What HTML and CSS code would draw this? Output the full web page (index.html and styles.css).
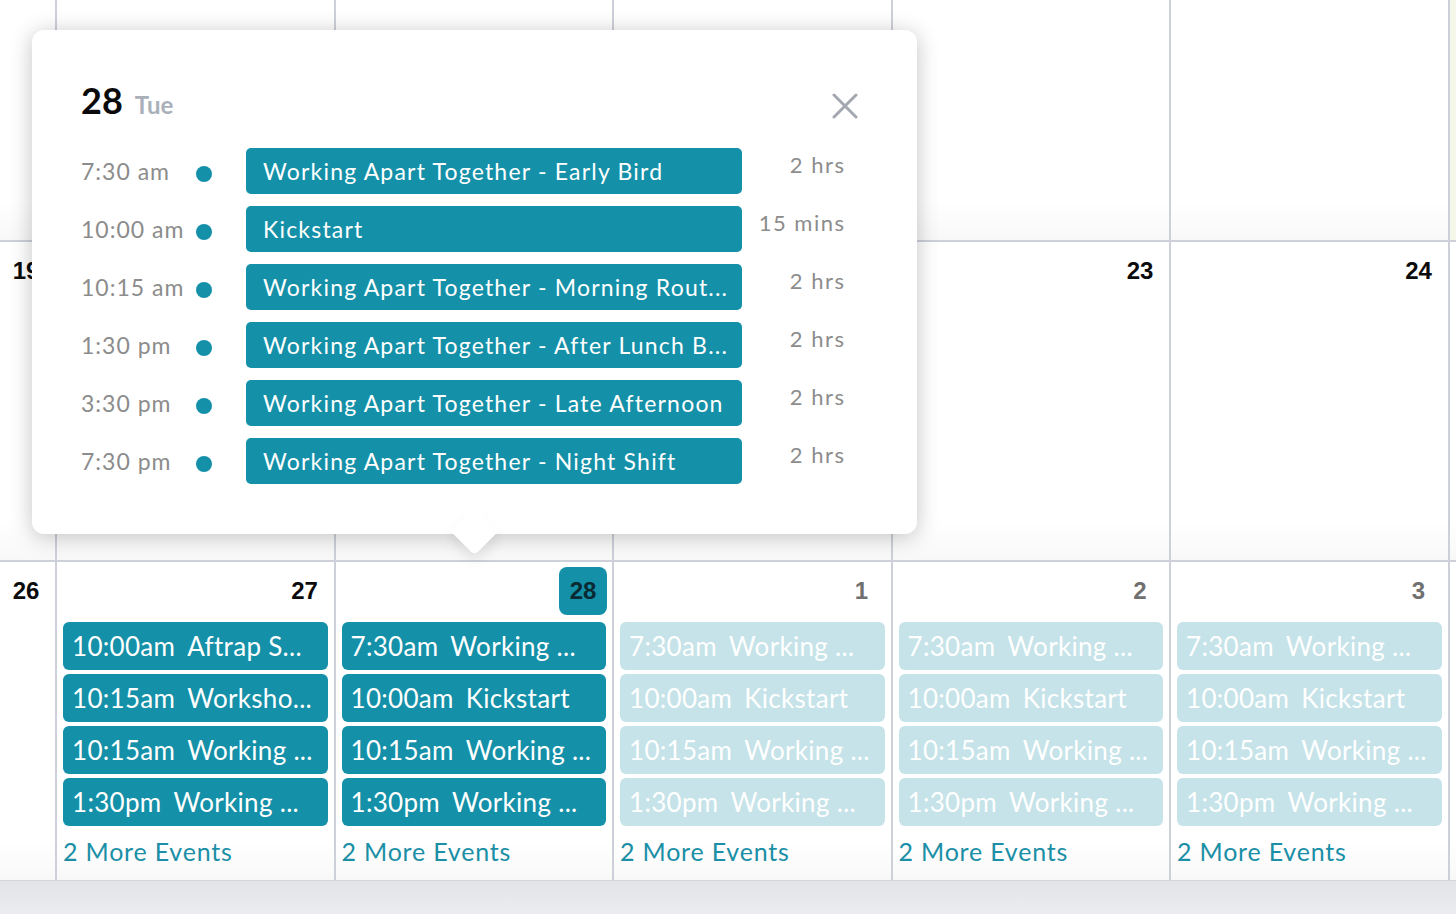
FILE: index.html
```html
<!DOCTYPE html>
<html lang="en">
<head>
<meta charset="utf-8">
<title>Calendar</title>
<link rel="stylesheet" href="styles.css">
</head>
<body>
<div class="app">
  <div class="calendar">
    <div class="month-grid">
      <div class="cell"></div>
      <div class="cell"></div>
      <div class="cell"></div>
      <div class="cell"></div>
      <div class="cell"></div>
      <div class="cell"></div>
      <div class="cell cell-today"></div>

      <div class="cell"><div class="day-head"><span class="day-num">19</span></div></div>
      <div class="cell"></div>
      <div class="cell"></div>
      <div class="cell"></div>
      <div class="cell"><div class="day-head"><span class="day-num">23</span></div></div>
      <div class="cell"><div class="day-head"><span class="day-num">24</span></div></div>
      <div class="cell"></div>

      <div class="cell"><div class="day-head"><span class="day-num">26</span></div></div>
      <div class="cell">
        <div class="day-head"><span class="day-num">27</span></div>
        <div class="chip"><span class="chip-time">10:00am</span>Aftrap S...</div>
        <div class="chip"><span class="chip-time">10:15am</span>Worksho...</div>
        <div class="chip"><span class="chip-time">10:15am</span>Working ...</div>
        <div class="chip"><span class="chip-time">1:30pm</span>Working ...</div>
        <div class="more">2 More Events</div>
      </div>
      <div class="cell">
        <div class="day-head"><span class="day-num day-num-selected">28</span></div>
        <div class="chip"><span class="chip-time">7:30am</span>Working ...</div>
        <div class="chip"><span class="chip-time">10:00am</span>Kickstart</div>
        <div class="chip"><span class="chip-time">10:15am</span>Working ...</div>
        <div class="chip"><span class="chip-time">1:30pm</span>Working ...</div>
        <div class="more">2 More Events</div>
      </div>
      <div class="cell">
        <div class="day-head"><span class="day-num day-num-next">1</span></div>
        <div class="chip chip-faded"><span class="chip-time">7:30am</span>Working ...</div>
        <div class="chip chip-faded"><span class="chip-time">10:00am</span>Kickstart</div>
        <div class="chip chip-faded"><span class="chip-time">10:15am</span>Working ...</div>
        <div class="chip chip-faded"><span class="chip-time">1:30pm</span>Working ...</div>
        <div class="more">2 More Events</div>
      </div>
      <div class="cell">
        <div class="day-head"><span class="day-num day-num-next">2</span></div>
        <div class="chip chip-faded"><span class="chip-time">7:30am</span>Working ...</div>
        <div class="chip chip-faded"><span class="chip-time">10:00am</span>Kickstart</div>
        <div class="chip chip-faded"><span class="chip-time">10:15am</span>Working ...</div>
        <div class="chip chip-faded"><span class="chip-time">1:30pm</span>Working ...</div>
        <div class="more">2 More Events</div>
      </div>
      <div class="cell">
        <div class="day-head"><span class="day-num day-num-next">3</span></div>
        <div class="chip chip-faded"><span class="chip-time">7:30am</span>Working ...</div>
        <div class="chip chip-faded"><span class="chip-time">10:00am</span>Kickstart</div>
        <div class="chip chip-faded"><span class="chip-time">10:15am</span>Working ...</div>
        <div class="chip chip-faded"><span class="chip-time">1:30pm</span>Working ...</div>
        <div class="more">2 More Events</div>
      </div>
      <div class="cell"></div>
    </div>
  </div>

  <div class="popover">
    <div class="popover-head">
      <div class="popover-date"><span class="popover-day">28</span><span class="popover-weekday">Tue</span></div>
      <button class="popover-close" aria-label="Close">
        <svg width="26" height="26" viewBox="0 0 26 26"><path d="M2 2 L24 24 M24 2 L2 24" stroke="#a3a7b0" stroke-width="3" stroke-linecap="round" fill="none"/></svg>
      </button>
    </div>
    <div class="agenda">
      <div class="agenda-row"><span class="agenda-time">7:30 am</span><span class="agenda-dot"></span><span class="agenda-bar">Working Apart Together - Early Bird</span><span class="agenda-dur">2 hrs</span></div>
      <div class="agenda-row"><span class="agenda-time">10:00 am</span><span class="agenda-dot"></span><span class="agenda-bar">Kickstart</span><span class="agenda-dur">15 mins</span></div>
      <div class="agenda-row"><span class="agenda-time">10:15 am</span><span class="agenda-dot"></span><span class="agenda-bar">Working Apart Together - Morning Rout...</span><span class="agenda-dur">2 hrs</span></div>
      <div class="agenda-row"><span class="agenda-time">1:30 pm</span><span class="agenda-dot"></span><span class="agenda-bar">Working Apart Together - After Lunch B...</span><span class="agenda-dur">2 hrs</span></div>
      <div class="agenda-row"><span class="agenda-time">3:30 pm</span><span class="agenda-dot"></span><span class="agenda-bar">Working Apart Together - Late Afternoon</span><span class="agenda-dur">2 hrs</span></div>
      <div class="agenda-row"><span class="agenda-time">7:30 pm</span><span class="agenda-dot"></span><span class="agenda-bar">Working Apart Together - Night Shift</span><span class="agenda-dur">2 hrs</span></div>
    </div>
    <span class="popover-arrow"></span>
  </div>

  <div class="footer-bar"></div>
</div>
</body>
</html>
```

FILE: styles.css
```css
* { box-sizing: border-box; }

html, body {
  margin: 0;
  padding: 0;
  width: 1456px;
  height: 914px;
  overflow: hidden;
  background: #ffffff;
  font-family: "Lato", "Open Sans", sans-serif;
}

.app {
  position: relative;
  width: 1456px;
  height: 914px;
  display: flex;
  flex-direction: column;
}

.calendar {
  height: 880px;
  overflow: hidden;
  background: #ffffff;
  flex: none;
}

.month-grid {
  display: grid;
  grid-template-columns: repeat(7, 276.5px);
  grid-template-rows: repeat(3, 318px);
  gap: 2px;
  background: #cdd0d9;
  width: max-content;
  margin-left: -221.5px;
  margin-top: -78px;
}

.cell {
  background: #ffffff;
  padding: 6px 6px 0 6px;
  display: flex;
  flex-direction: column;
  background-image: linear-gradient(to bottom, #ffffff 88%, #f8f8f9 100%);
}

.cell-today {
  background: #f6f7eb;
}

.day-head {
  height: 48px;
  display: flex;
  justify-content: flex-end;
  align-items: center;
  margin-top: -1px;
  margin-right: -1px;
  margin-bottom: 7px;
  flex: none;
}

.day-num {
  font-family: "Liberation Sans", Arial, sans-serif;
  font-weight: 700;
  font-size: 24px;
  color: #0b0b0b;
  min-width: 48px;
  text-align: center;
  line-height: 28px;
}

.day-num-next {
  color: #707070;
}

.day-num-selected {
  background: #1490a8;
  color: #0a2a33;
  width: 48px;
  height: 48px;
  border-radius: 8px;
  display: flex;
  align-items: center;
  justify-content: center;
}

.chip {
  height: 48px;
  margin-bottom: 4px;
  border-radius: 6px;
  background: #1490a8;
  color: #ffffff;
  font-size: 26px;
  letter-spacing: 0.3px;
  line-height: 48px;
  padding-left: 9px;
  white-space: nowrap;
  overflow: hidden;
  flex: none;
}

.chip-faded {
  background: #c5e3e8;
}

.chip-time {
  margin-right: 12px;
}

.more {
  color: #1a8fa6;
  font-size: 25px;
  letter-spacing: 0.8px;
  line-height: 30px;
  margin-top: 6px;
}

.footer-bar {
  flex: 1;
  background: linear-gradient(to bottom, #e3e4e8, #ebecef);
  border-top: 1px solid #d6d7dc;
}

/* popover */
.popover {
  position: absolute;
  left: 32px;
  top: 30px;
  width: 885px;
  height: 504px;
  background: #ffffff;
  border-radius: 12px;
  box-shadow: 0 3px 22px rgba(0, 0, 0, 0.24);
  padding: 44px 59px 0 49px;
}

.popover-arrow {
  position: absolute;
  left: 425px;
  top: 483px;
  width: 35px;
  height: 35px;
  background: #ffffff;
  transform: rotate(45deg);
  border-bottom-right-radius: 5px;
  box-shadow: 6px 6px 12px rgba(0, 0, 0, 0.08);
}

.popover-head {
  display: flex;
  justify-content: space-between;
  align-items: center;
  height: 52px;
  margin-bottom: 22px;
}

.popover-date {
  display: flex;
  align-items: baseline;
}

.popover-day {
  font-size: 36px;
  font-weight: 700;
  color: #0a0a0a;
}

.popover-weekday {
  font-size: 24px;
  font-weight: 700;
  color: #aab0ba;
  margin-left: 12px;
}

.popover-close {
  border: 0;
  background: none;
  padding: 0;
  width: 26px;
  height: 26px;
  margin-top: 12px;
  display: flex;
}

.agenda {
  display: flex;
  flex-direction: column;
  gap: 12px;
}

.agenda-row {
  display: grid;
  grid-template-columns: 115px 50px 496px 1fr;
  height: 46px;
  align-items: center;
  margin-right: 14px;
}

.agenda-time {
  font-size: 23px;
  letter-spacing: 1px;
  color: #8c8c8c;
}

.agenda-dot {
  width: 16px;
  height: 16px;
  border-radius: 50%;
  background: #1490a8;
  margin-top: 6px;
}

.agenda-bar {
  height: 46px;
  border-radius: 5px;
  background: #1490a8;
  color: #ffffff;
  font-size: 23px;
  letter-spacing: 1.2px;
  line-height: 46px;
  padding-left: 17px;
  white-space: nowrap;
  overflow: hidden;
}

.agenda-dur {
  font-size: 22px;
  letter-spacing: 1.5px;
  color: #8c8c8c;
  text-align: right;
  margin-bottom: 14px;
  margin-right: -1.5px;
}
```
